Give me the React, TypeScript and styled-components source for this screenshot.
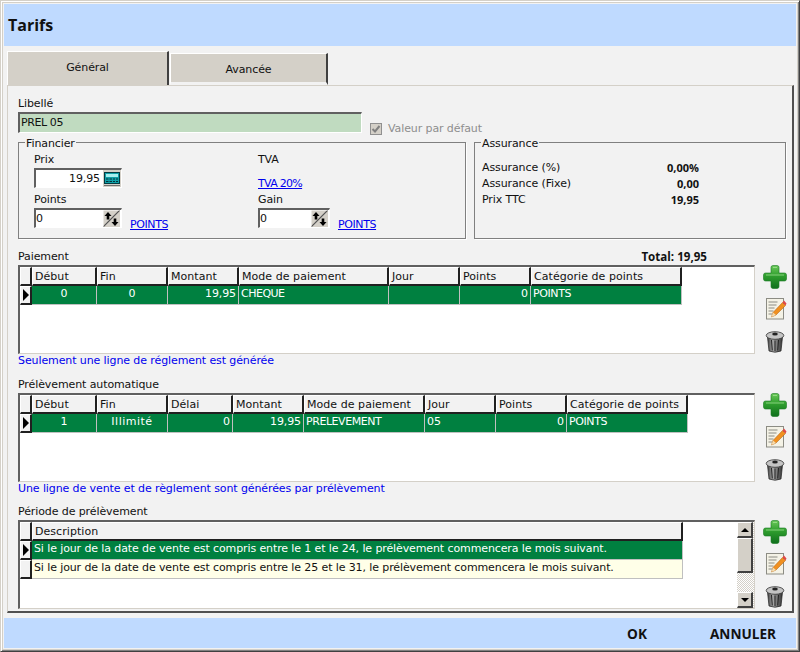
import React from 'react';
import styled, { createGlobalStyle } from 'styled-components';

const Global = createGlobalStyle`
  html, body { margin: 0; padding: 0; background: #d4d0c8; }
  * { box-sizing: border-box; }
  #root { width: 800px; height: 652px; }
`;

const Win = styled.div`
  width: 800px; height: 652px; display: flex; flex-direction: column;
  background: #f2f2f2; font-family: "DejaVu Sans", sans-serif; font-size: 11px; letter-spacing: -0.1px; color: #111;
  border-style: solid; border-width: 1px; border-color: #d4d0c8 #404040 #404040 #d4d0c8;
  box-shadow: inset 1px 1px 0 #fff, inset -1px -1px 0 #808080, inset 2px 2px 0 #d4d0c8, inset -2px -2px 0 #d4d0c8;
  padding: 3px;
  overflow: hidden;
`;
const TitleBar = styled.div`
  height: 42px; flex: none; background: #bfdaff; display: flex; align-items: center; padding-left: 4px;
  font: bold 16px "Open Sans", sans-serif; letter-spacing: 0; color: #111;
`;
const Body = styled.div`
  flex: 1; display: flex; flex-direction: column; padding: 5px 2px 5px 3px; min-height: 0;
`;
const Tabs = styled.div`display: flex; height: 34px; flex: none; align-items: flex-end;`;
const Tab = styled.div<{ $w: number; $active?: boolean }>`
  width: ${p => p.$w}px; height: ${p => (p.$active ? 34 : 32)}px; margin-right: 1px;
  background: #d4d0c8; display: flex; align-items: center; justify-content: center;
  border-top: 1px solid #fff; border-left: 1px solid #fff; border-right: 2px solid #404040;
  ${p => (p.$active ? 'padding-bottom: 3px;' : 'padding-top: 3px; border-bottom: 3px solid #f2f2f2;')}
`;
const Panel = styled.div`
  flex: 1; min-height: 0; padding: 9px 0 0 10px; display: flex; flex-direction: column;
  border-style: solid; border-width: 1px 2px 2px 1px; border-color: #d4d0c8 #505050 #505050 #d4d0c8;
`;
const Label = styled.div`height: 17px; line-height: 18px; flex: none;`;
const LibelleRow = styled.div`display: flex; align-items: flex-end; height: 21px; flex: none;`;
const TextInput = styled.div`
  width: 344px; height: 21px; background: #c0dbc0; padding-left: 1px; line-height: 17px; letter-spacing: -0.4px;
  border-style: solid; border-width: 2px 1px 1px 2px; border-color: #606060 #fff #fff #606060;
`;
const CheckWrap = styled.div`
  display: flex; align-items: center; gap: 6px; margin-left: 8px; color: #8e8e8e; height: 13px;
  transform: translateY(2px);
`;
const Check = styled.span`
  width: 12px; height: 12px; background: #d4d0c8; border: 1px solid #909090; display: inline-flex;
  align-items: center; justify-content: center;
`;
const Boxes = styled.div`display: flex; gap: 8px; margin-top: 9px; height: 97px; flex: none;`;
const Group = styled.div<{ $w: number; $pad: number }>`
  width: ${p => p.$w}px; position: relative; border: 1px solid #808080; box-shadow: 1px 1px 0 #fff;
  padding: 8px 8px 0 ${p => p.$pad}px;
`;
const Legend = styled.span`
  position: absolute; left: 6px; top: -6px; background: #f2f2f2; line-height: 13px; padding: 0 1px;
`;
const FinGrid = styled.div`display: grid; grid-template-columns: 224px 1fr; grid-template-rows: 40px 41px;`;
const Field = styled.div`display: flex; flex-direction: column;`;
const FLabel = styled.div`height: 17px; line-height: 18px;`;
const Sunken = styled.div<{ $w: number }>`
  width: ${p => p.$w}px; height: 20px; background: #fff; display: flex; align-items: center;
  border-style: solid; border-width: 2px 1px 1px 2px; border-color: #606060 #fff #fff #606060;
`;
const Val = styled.div`flex: 1; padding: 0 3px 0 0; line-height: 16px;`;
const RVal = styled(Val)`text-align: right;`;
const Row = styled.div`display: flex; align-items: flex-end; gap: 8px;`;
const Link = styled.a`color: #0000ee; text-decoration: underline; line-height: 13px; margin-bottom: -3px; letter-spacing: -0.4px;`;
const TvaLink = styled(Link)`margin-top: 9px; display: block; letter-spacing: -0.7px;`;
const AssGrid = styled.div`
  margin-top: 9px; width: 217px; display: grid; grid-template-columns: 1fr auto; grid-auto-rows: 16px; line-height: 16px;
`;
const Bold = styled.span`font-weight: bold; text-align: right; font-family: "Open Sans", sans-serif; font-size: 11px; letter-spacing: 0;`;
const SectionHead = styled.div<{ $top: number }>`
  display: flex; justify-content: space-between; height: 17px; line-height: 18px; margin-top: ${p => p.$top}px; width: 689px; flex: none;
`;
const Total = styled.span`font-weight: bold; font-family: "Open Sans", sans-serif; font-size: 11.6px; letter-spacing: 0;`;
const GridRow = styled.div`display: flex; flex: none; height: 89px;`;
const GridBox = styled.div`
  width: 737px; height: 89px; background: #fff; display: flex; position: relative; overflow: hidden;
  border-style: solid; border-width: 2px 1px 1px 2px; border-color: #606060 #d4d0c8 #d4d0c8 #606060;
`;
const GridMain = styled.div`flex: 1; min-width: 0;`;
const GRow = styled.div`display: flex; height: 19px;`;
const Ind = styled.div`
  width: 12px; height: 19px; background: #f2f2f2; flex: none; display: flex; align-items: center; justify-content: center;
  border-style: solid; border-width: 1px 2px 2px 1px; border-color: #fff #202020 #202020 #fff;
`;
const Arrow = styled.span`
  width: 0; height: 0; border-left: 6px solid #000; border-top: 6px solid transparent; border-bottom: 6px solid transparent; display: block; margin-left: 1px;
`;
const Head = styled.div<{ $w: number }>`
  width: ${p => p.$w}px; height: 19px; background: #f2f2f2; padding-left: 2px; line-height: 17px; flex: none; white-space: nowrap; letter-spacing: 0.05px;
  border-style: solid; border-width: 1px 2px 2px 1px; border-color: #fff #202020 #202020 #fff;
`;
const Cell = styled.div<{ $w: number; $align?: string; $light?: boolean; $ls?: number }>`
  width: ${p => p.$w}px; height: 19px; flex: none; white-space: nowrap; line-height: 15px; padding: 0 2px;
  letter-spacing: ${p => (p.$ls === undefined ? -0.11 : p.$ls)}px;
  background: ${p => (p.$light ? '#ffffe8' : '#008040')}; color: ${p => (p.$light ? '#111' : '#fff')};
  text-align: ${p => p.$align || 'left'};
  border-style: solid; border-width: 0 1px 1px 0; border-color: #c0c0c0;
`;
const Note = styled.div`color: #0000ee; height: 14px; line-height: 14px; flex: none;`;
const Tools = styled.div`
  width: 37px; display: flex; flex-direction: column; align-items: center; padding-left: 3px; gap: 8px; flex: none;
`;
const ToolBtn = styled.div`width: 24px; height: 24px; display: flex; align-items: center; justify-content: center;`;
const Scroll = styled.div`
  width: 17px; flex: none; display: flex; flex-direction: column; height: 100%;
  background: repeating-conic-gradient(#d4d0c8 0 25%, #fff 0 50%) 0 0 / 2px 2px;
`;
const SBtn = styled.div`
  width: 16px; height: 16px; background: #d4d0c8; display: flex; align-items: center; justify-content: center; flex: none;
  border-style: solid; border-width: 1px 2px 2px 1px; border-color: #fff #404040 #404040 #fff;
`;
const Thumb = styled.div`
  width: 16px; height: 35px; background: #d4d0c8; flex: none;
  border-style: solid; border-width: 1px 2px 2px 1px; border-color: #fff #404040 #404040 #fff;
`;
const Spacer = styled.div`flex: 1;`;
const Tri = styled.span<{ $up?: boolean }>`
  width: 0; height: 0; border-left: 4px solid transparent; border-right: 4px solid transparent;
  ${p => (p.$up ? 'border-bottom: 4px solid #000;' : 'border-top: 4px solid #000;')}
`;
const Footer = styled.div`
  height: 30px; flex: none; background: #bfdaff; display: flex; align-items: center; justify-content: flex-end; gap: 63px; padding-right: 20px;
  font: bold 13.6px "Open Sans", sans-serif; letter-spacing: 0; color: #111;
`;

const SpinIcon = () => (
  <svg width="17" height="17" viewBox="0 0 17 17" style={{ flex: 'none', marginRight: 1 }}>
    <rect width="17" height="17" fill="#d4d0c8" />
    <path d="M0 17L17 0" stroke="#505050" strokeWidth="1.2" />
    <path d="M0 0H17M0 0V17" stroke="#fff" />
    <path d="M5 2L8.500 6H6.300V9.500H3.700V6H1.500Z" fill="#000" />
    <path d="M12 16L8.500 12H10.700V8.500H13.300V12H15.500Z" fill="#000" />
  </svg>
);
const CalcIcon = () => (
  <svg width="18" height="17" viewBox="0 0 18 17" style={{ flex: 'none' }}>
    <rect width="18" height="17" fill="#d4d0c8" />
    <rect x="1.500" y="2.500" width="15" height="11" fill="#10a0a8" stroke="#043a40" />
    <rect x="3" y="4" width="12" height="3" fill="#a8f0f0" />
    <path d="M3 9h2.500M6.500 9h2.500M10 9h2M13 9h2M3 11.500h2.500M6.500 11.500h2.500M10 11.500h2M13 11.500h2" stroke="#04323a" />
    <path d="M1 15.500h16" stroke="#707070" />
  </svg>
);
const PlusIcon = () => (
  <svg width="24" height="24" viewBox="0 0 24 24">
    <defs>
      <linearGradient id="pg" x1="0" y1="0" x2="0" y2="1">
        <stop offset="0" stopColor="#6cc95a" /><stop offset="0.45" stopColor="#2f9e2e" /><stop offset="1" stopColor="#0f6f1c" />
      </linearGradient>
    </defs>
    <path d="M8 2.500Q8 0.500 10 0.500h4Q16 0.500 16 2.500V8h5.500Q23.500 8 23.500 10v4Q23.500 16 21.500 16H16v5.500Q16 23.500 14 23.500h-4Q8 23.500 8 21.500V16H2.500Q0.500 16 0.500 14v-4Q0.500 8 2.500 8H8Z" fill="url(#pg)" stroke="#1a7a22" strokeWidth="0.6" />
    <path d="M10 2.500h4M3 10h18" stroke="#a8e69a" strokeOpacity="0.7" />
  </svg>
);
const EditIcon = () => (
  <svg width="24" height="24" viewBox="0 0 24 24">
    <rect x="3.500" y="1.500" width="17" height="20.500" fill="#f4f2e6" stroke="#8c8c84" />
    <path d="M5.500 5h9M5.500 8h8M5.500 11h6M5.500 14h5M5.500 17h4" stroke="#8c8c84" />
    <path d="M8.500 20L10 15.500 19.500 5.500 22.500 8.500 13 18Z" fill="#f09020" stroke="#a85a10" strokeWidth="0.5" />
    <path d="M19.500 5.500L21 3.500 23.500 6.500 22.500 8.500Z" fill="#e04848" />
    <path d="M8.500 20L10 15.500 13 18Z" fill="#f4dcb0" />
  </svg>
);
const TrashIcon = () => (
  <svg width="24" height="24" viewBox="0 0 24 24">
    <defs>
      <linearGradient id="tg" x1="0" y1="0" x2="1" y2="0">
        <stop offset="0" stopColor="#3c3c3c" /><stop offset="0.35" stopColor="#aaa" /><stop offset="1" stopColor="#333" />
      </linearGradient>
    </defs>
    <path d="M4.500 8L6 22Q12 24.500 18 22L19.500 8Z" fill="url(#tg)" stroke="#222" strokeWidth="0.7" />
    <path d="M8.500 11L9.300 21.500M12 11.500V22M15.500 11L14.700 21.500" stroke="#222" />
    <ellipse cx="12" cy="6.500" rx="8.800" ry="3.800" fill="#c4c4c4" stroke="#333" strokeWidth="0.8" />
    <ellipse cx="12" cy="5" rx="2.800" ry="1.500" fill="#222" />
  </svg>
);

const ToolColumn = () => (
  <Tools>
    <ToolBtn><PlusIcon /></ToolBtn>
    <ToolBtn><EditIcon /></ToolBtn>
    <ToolBtn><TrashIcon /></ToolBtn>
  </Tools>
);

type Col = { t: string; w: number; v: string; a?: string; ls?: number };
const pay: Col[] = [
  { t: 'Début', w: 65, v: '0', a: 'center' },
  { t: 'Fin', w: 71, v: '0', a: 'center' },
  { t: 'Montant', w: 71, v: '19,95', a: 'right' },
  { t: 'Mode de paiement', w: 150, v: 'CHEQUE', ls: -0.5 },
  { t: 'Jour', w: 71, v: '' },
  { t: 'Points', w: 71, v: '0', a: 'right' },
  { t: 'Catégorie de points', w: 151, v: 'POINTS', ls: -0.4 },
];
const pre: Col[] = [
  { t: 'Début', w: 65, v: '1', a: 'center' },
  { t: 'Fin', w: 71, v: 'Illimité', a: 'center', ls: 0.5 },
  { t: 'Délai', w: 65, v: '0', a: 'right' },
  { t: 'Montant', w: 71, v: '19,95', a: 'right' },
  { t: 'Mode de paiement', w: 121, v: 'PRELEVEMENT', ls: -0.45 },
  { t: 'Jour', w: 71, v: '05' },
  { t: 'Points', w: 71, v: '0', a: 'right' },
  { t: 'Catégorie de points', w: 121, v: 'POINTS', ls: -0.4 },
];

const DataGrid = ({ cols }: { cols: Col[] }) => (
  <GridRow>
    <GridBox>
      <GridMain>
        <GRow><Ind />{cols.map(c => <Head key={c.t} $w={c.w}>{c.t}</Head>)}</GRow>
        <GRow>
          <Ind><Arrow /></Ind>
          {cols.map(c => <Cell key={c.t} $w={c.w} $align={c.a} $ls={c.ls}>{c.v}</Cell>)}
        </GRow>
      </GridMain>
    </GridBox>
    <ToolColumn />
  </GridRow>
);

export default function App() {
  return (
    <Win>
      <Global />
      <TitleBar>Tarifs</TitleBar>
      <Body>
        <Tabs>
          <Tab $w={162} $active>Général</Tab>
          <Tab $w={158}>Avancée</Tab>
        </Tabs>
        <Panel>
          <Label>Libellé</Label>
          <LibelleRow>
            <TextInput>PREL 05</TextInput>
            <CheckWrap>
              <Check>
                <svg width="10" height="10" viewBox="0 0 10 10"><path d="M1.500 5L4 7.500 8.500 2" stroke="#808080" strokeWidth="2" fill="none" /></svg>
              </Check>
              Valeur par défaut
            </CheckWrap>
          </LibelleRow>
          <Boxes>
            <Group $w={448} $pad={15}>
              <Legend>Financier</Legend>
              <FinGrid>
                <Field>
                  <FLabel>Prix</FLabel>
                  <Sunken $w={88}><RVal>19,95</RVal><CalcIcon /></Sunken>
                </Field>
                <Field>
                  <FLabel>TVA</FLabel>
                  <TvaLink>TVA 20%</TvaLink>
                </Field>
                <Field>
                  <FLabel>Points</FLabel>
                  <Row>
                    <Sunken $w={88}><Val>0</Val><SpinIcon /></Sunken>
                    <Link>POINTS</Link>
                  </Row>
                </Field>
                <Field>
                  <FLabel>Gain</FLabel>
                  <Row>
                    <Sunken $w={72}><Val>0</Val><SpinIcon /></Sunken>
                    <Link>POINTS</Link>
                  </Row>
                </Field>
              </FinGrid>
            </Group>
            <Group $w={312} $pad={7}>
              <Legend>Assurance</Legend>
              <AssGrid>
                <span>Assurance (%)</span><Bold>0,00%</Bold>
                <span>Assurance (Fixe)</span><Bold>0,00</Bold>
                <span>Prix TTC</span><Bold>19,95</Bold>
              </AssGrid>
            </Group>
          </Boxes>
          <SectionHead $top={9}><span>Paiement</span><Total>Total: 19,95</Total></SectionHead>
          <DataGrid cols={pay} />
          <Note>Seulement une ligne de réglement est générée</Note>
          <SectionHead $top={8}>Prélèvement automatique</SectionHead>
          <DataGrid cols={pre} />
          <Note>Une ligne de vente et de règlement sont générées par prélèvement</Note>
          <SectionHead $top={7}>Période de prélèvement</SectionHead>
          <GridRow>
            <GridBox>
              <GridMain>
                <GRow><Ind /><Head $w={651}>Description</Head></GRow>
                <GRow><Ind><Arrow /></Ind><Cell $w={651}>Si le jour de la date de vente est compris entre le 1 et le 24, le prélèvement commencera le mois suivant.</Cell></GRow>
                <GRow><Ind /><Cell $w={651} $light>Si le jour de la date de vente est compris entre le 25 et le 31, le prélèvement commencera le mois suivant.</Cell></GRow>
              </GridMain>
              <Scroll>
                <SBtn><Tri $up /></SBtn>
                <Thumb />
                <Spacer />
                <SBtn><Tri /></SBtn>
              </Scroll>
            </GridBox>
            <ToolColumn />
          </GridRow>
        </Panel>
      </Body>
      <Footer><span>OK</span><span>ANNULER</span></Footer>
    </Win>
  );
}
